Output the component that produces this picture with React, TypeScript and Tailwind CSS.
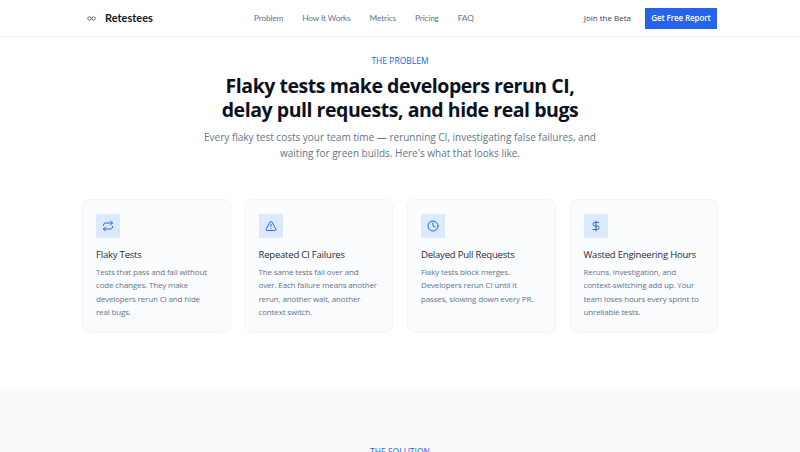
import { AlertTriangle, Clock, DollarSign, Repeat } from 'lucide-react'

const links = ['Problem', 'How It Works', 'Metrics', 'Pricing', 'FAQ']

const cards = [
    { icon: Repeat, title: 'Flaky Tests', text: 'Tests that pass and fail without code changes. They make developers rerun CI and hide real bugs.' },
    { icon: AlertTriangle, title: 'Repeated CI Failures', text: 'The same tests fail over and over. Each failure means another rerun, another wait, another context switch.' },
    { icon: Clock, title: 'Delayed Pull Requests', text: 'Flaky tests block merges. Developers rerun CI until it passes, slowing down every PR.' },
    { icon: DollarSign, title: 'Wasted Engineering Hours', text: 'Reruns, investigation, and context-switching add up. Your team loses hours every sprint to unreliable tests.' },
]

function App() {
    return (
        <div className="h-[452px] overflow-hidden bg-white font-['Open_Sans',sans-serif] text-[#0f172a]">
            {/* Nav */}
            <header className="h-[37px] border-b border-[#eef1f5]">
                <div className="mx-auto flex h-full w-[636px] items-center">
                    <div className="flex w-[172px] items-center gap-[9px] pl-[5px]">
                        <svg viewBox="0 0 24 12" className="h-[5px] w-[9px] text-[#334155]" fill="none" stroke="currentColor" strokeWidth="2">
                            <circle cx="6.5" cy="6" r="4.5" />
                            <circle cx="17.5" cy="6" r="4.5" />
                        </svg>
                        <span className="font-['Lato',sans-serif] text-[11px] font-bold">Retestees</span>
                    </div>
                    <nav className="flex gap-[19px] font-['Lato',sans-serif] text-[8.3px] tracking-[-0.15px] text-[#64748b]">
                        {links.map((l) => (
                            <a key={l}>{l}</a>
                        ))}
                    </nav>
                    <div className="ml-auto flex items-center gap-[14px] pr-[1px]">
                        <a className="text-[8px] font-medium text-[#334155]">Join the Beta</a>
                        <button className="h-[21px] w-[72px] bg-[#2563eb] text-[8px] font-semibold tracking-[-0.1px] text-white">Get Free Report</button>
                    </div>
                </div>
            </header>

            {/* Problem */}
            <section className="pt-[17px] pb-[56px]">
                <p className="text-center text-[8.5px] leading-[13px] text-[#2563eb]">THE PROBLEM</p>
                <h1 className="mt-[7px] text-center text-[19.5px] leading-[24px] font-bold tracking-[-0.45px] text-[#0b1120]">
                    Flaky tests make developers rerun CI,
                    <br />
                    delay pull requests, and hide real bugs
                </h1>
                <p className="mx-auto mt-[7px] w-[420px] text-center text-[10px] leading-[16px] text-[#64748b]">
                    Every flaky test costs your team time — rerunning CI, investigating false failures, and waiting for green builds. Here's what that looks like.
                </p>

                <div className="mx-auto mt-[38px] grid w-[636px] grid-cols-4 gap-[14px]">
                    {cards.map((c) => (
                        <div key={c.title} className="h-[134px] rounded-[8px] border border-[#f1f5f9] bg-[#fbfcfe] px-[13px] py-[14px]">
                            <div className="flex h-[24px] w-[24px] items-center justify-center bg-[#dbeafe]">
                                <c.icon className="h-[12px] w-[12px] text-[#2563eb]" strokeWidth={2} />
                            </div>
                            <h3 className="mt-[9px] text-[9.5px] leading-[15px] font-medium tracking-[-0.2px] text-[#1e293b]">{c.title}</h3>
                            <p className="mt-[3px] pr-[2px] text-[8px] leading-[13.3px] tracking-[-0.15px] text-[#64748b]">{c.text}</p>
                        </div>
                    ))}
                </div>
            </section>

            {/* Solution */}
            <section className="h-[200px] bg-[#f8fafc] pt-[56px]">
                <p className="text-center text-[8.5px] leading-[13px] text-[#2563eb]">THE SOLUTION</p>
            </section>
        </div>
    )
}

export default App
